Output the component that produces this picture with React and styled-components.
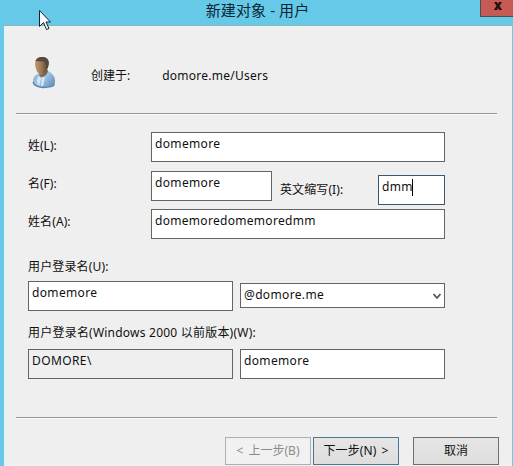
import React from "react";
import styled, { createGlobalStyle } from "styled-components";

const Global = createGlobalStyle`
  * { box-sizing: border-box; }
  body { margin: 0; overflow: hidden; }
`;

const Window = styled.main`
  position: relative;
  width: 513px;
  height: 466px;
  display: flex;
  flex-direction: column;
  padding: 0 1px 0 4px;
  overflow: hidden;
  background: #67c9e8;
  color: #101010;
  font: 12px/16px "Noto Sans", "Noto Sans CJK SC", sans-serif;
  white-space: nowrap;
`;

const TitleBar = styled.header`
  flex: none;
  height: 25px;
  display: flex;
  justify-content: center;
  padding: 0 1px 0 0;
  color: #0b2634;
  font-size: 15px;
  line-height: 20px;
`;

const CloseButton = styled.button`
  position: absolute;
  top: 0;
  right: 0;
  width: 33px;
  height: 17px;
  padding: 0;
  border: 1px solid #4c4c50;
  border-width: 0 0 1px 1px;
  background: #c55b54;
  display: flex;
  svg { margin: 2px 0 0 12px; }
`;

const Pointer = styled.svg`
  position: absolute;
  left: 38px;
  top: 9px;
`;

const Body = styled.section`
  flex: 1;
  display: flex;
  flex-direction: column;
  padding: 0 12px;
  background: #efefef;
  border-top: 1px solid #8fb3bd;
  box-shadow: inset 1px 1px 0 #e9f3f6, inset -1px 0 0 #e6f1f4;
`;

const Summary = styled.div`
  height: 87px;
  display: flex;
  align-items: flex-start;
  padding: 30px 0 0 14px;
`;

const Rule = styled.hr`
  flex: none;
  width: 481px;
  height: 2px;
  margin: 0;
  border: 0;
  background: #fcfcfc;
  border-top: 1px solid ${(p) => p.$color || "#939790"};
`;

const Text = styled.span`
  display: block;
  letter-spacing: ${(p) => p.$track || 0}px;
  margin-left: ${(p) => p.$left || 0}px;
  margin-top: ${(p) => p.$top || 0}px;
`;

const Form = styled.div`
  height: 302px;
  width: 429px;
  padding: 17px 0 0 12px;
`;

const FieldRow = styled.div`
  display: grid;
  grid-template-columns: ${(p) => p.$columns};
  column-gap: ${(p) => p.$gap || 0}px;
  align-items: start;
  height: ${(p) => p.$height}px;
`;

const Field = styled.div`
  height: 30px;
  margin-top: ${(p) => p.$top || 0}px;
  padding: 3px 3px 0;
  display: flex;
  border: 1px solid ${(p) => (p.$focused ? "#3c566d" : "#646464")};
  background: ${(p) => (p.$readOnly ? "#efefef" : "#fff")};
  letter-spacing: ${(p) => p.$track ?? 0.35}px;
`;

const Combo = styled(Field)`
  height: 25px;
  margin-top: 2px;
`;

const Caret = styled.i`
  width: 1px;
  height: 17px;
  margin-left: -1px;
  background: #000;
`;

const Chevron = styled.svg`
  margin: 6px 0 0 auto;
`;

const Actions = styled.footer`
  display: flex;
  padding: 18px 0 0 209px;
`;

const Button = styled.button`
  flex: none;
  width: 86px;
  height: 28px;
  padding: 0 0 1px;
  margin-right: ${(p) => p.$gap || 0}px;
  border: 1px solid ${(p) => (p.$primary ? "#4b7792" : "#707070")};
  background: linear-gradient(#e5e5e5, #dedede);
  color: #101010;
  font: inherit;
  letter-spacing: ${(p) => p.$track || 0}px;
  word-spacing: ${(p) => p.$words || 0}px;
  &:disabled {
    border-color: #a6b1b8;
    background: #f1f1f1;
    color: #8b8b8b;
  }
`;

function UserIcon() {
  return (
    <svg width="26" height="34" viewBox="0 0 26 34">
      <defs>
        <linearGradient id="coat" x1="0" y1="0" x2="1" y2=".6">
          <stop offset="0" stopColor="#7ea3c6" />
          <stop offset=".5" stopColor="#a9cbe9" />
          <stop offset="1" stopColor="#6f98c2" />
        </linearGradient>
        <linearGradient id="face">
          <stop offset="0" stopColor="#c39a70" />
          <stop offset=".5" stopColor="#9a7555" />
          <stop offset="1" stopColor="#4d3d30" />
        </linearGradient>
      </defs>
      <path d="M3 26c0-4 1-6 5-8l10-3c4 2 7 5 7 10 0 4-1 5-4 6H11c-5-1-8-2-8-5z" fill="url(#coat)" />
      <path d="M3 26c1 4 5 5 10 5.500 5 0 10-.5 11.500-3" fill="none" stroke="#5682ae" strokeWidth="1.300" />
      <path d="M9 16l9-2c0 3-2 6-6 7-2 0-3-2-3-5z" fill="#7d6350" />
      <path d="M8 20l3 2-2 8-2-5zM12 22l3-1-2 9-2 0z" fill="#d8e9f5" />
      <path d="M5 7c0-4 3-6 7-6 5 0 7 3 6.500 8-.5 5-4 9.500-7.500 10-3.500-.5-6-7-6-12z" fill="url(#face)" />
      <path d="M5.500 5C7 1.500 10 .5 13 1c5 .5 6.500 4 5.500 8l-2 4-.5-5-2-2.500z" fill="#534a41" />
    </svg>
  );
}

export default function App() {
  return (
    <>
      <Global />
      <Window>
        <TitleBar>
          <Text $track={0.1}>新建对象 - 用户</Text>
        </TitleBar>
        <CloseButton aria-label="关闭">
          <svg width="10" height="9" viewBox="0 0 10 9">
            <path d="M1 0h3l1 2 1-2h3L6.500 4 9 7.500v.5H6L5 6 4 8H1v-.5L3.500 4z" fill="#201312" />
          </svg>
        </CloseButton>
        <Body>
          <Summary>
            <UserIcon />
            <Text $left={35} $top={12}>创建于:</Text>
            <Text $left={32} $top={12} $track={0.25}>domore.me/Users</Text>
          </Summary>
          <Rule />
          <Form>
            <FieldRow $columns="123px 294px" $height={39}>
              <Text $top={6}>姓(L):</Text>
              <Field>domemore</Field>
            </FieldRow>
            <FieldRow $columns="123px 121px 106px 67px" $height={38}>
              <Text $top={5}>名(F):</Text>
              <Field>domemore</Field>
              <Text $top={11} $left={8} $track={0.1}>英文缩写(I):</Text>
              <Field $top={4} $focused>
                dmm
                <Caret />
              </Field>
            </FieldRow>
            <FieldRow $columns="123px 294px" $height={49}>
              <Text $top={5} $track={0.1}>姓名(A):</Text>
              <Field $track={0.3}>domemoredomemoredmm</Field>
            </FieldRow>
            <FieldRow $columns="1fr" $height={23}>
              <Text $top={1} $track={0.15}>用户登录名(U):</Text>
            </FieldRow>
            <FieldRow $columns="205px 205px" $gap={7} $height={43}>
              <Field>domemore</Field>
              <Combo>
                @domore.me
                <Chevron width="8" height="7" viewBox="0 0 8 7">
                  <path d="M.5 1L4 5l3.500-4" fill="none" stroke="#555" strokeWidth="1.800" />
                </Chevron>
              </Combo>
            </FieldRow>
            <FieldRow $columns="1fr" $height={25}>
              <Text $top={1} $track={0.22}>用户登录名(Windows 2000 以前版本)(W):</Text>
            </FieldRow>
            <FieldRow $columns="205px 205px" $gap={7} $height={30}>
              <Field $readOnly $track={0.4}>DOMORE\</Field>
              <Field>domemore</Field>
            </FieldRow>
          </Form>
          <Rule $color="#92969a" />
          <Actions>
            <Button disabled $gap={2} $words={2}>&lt; 上一步(B)</Button>
            <Button $primary $gap={14} $words={2} $track={0.1}>下一步(N) &gt;</Button>
            <Button>取消</Button>
          </Actions>
        </Body>
        <Pointer width="13" height="22" viewBox="0 0 13 22">
          <path d="M1.500 1.500v16l4-4 3 7 2.500-1-3-6.500h4.500z" fill="#f8fcfd" stroke="#17242a" />
        </Pointer>
      </Window>
    </>
  );
}
